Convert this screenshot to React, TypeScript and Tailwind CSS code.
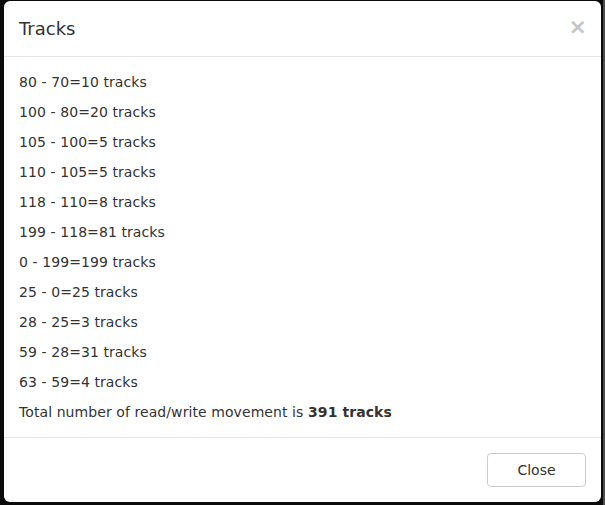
const rows = [
  "80 - 70=10 tracks",
  "100 - 80=20 tracks",
  "105 - 100=5 tracks",
  "110 - 105=5 tracks",
  "118 - 110=8 tracks",
  "199 - 118=81 tracks",
  "0 - 199=199 tracks",
  "25 - 0=25 tracks",
  "28 - 25=3 tracks",
  "59 - 28=31 tracks",
  "63 - 59=4 tracks",
]

export default function App() {
  return (
    <div className="w-[605px] h-[505px] bg-[#0b0b0b] flex overflow-hidden font-['DejaVu_Sans',sans-serif] text-[#333]">
      {/* Modal */}
      <div className="ml-[4px] mt-[1px] w-[597px] h-[501px] bg-white rounded-[6px] flex flex-col overflow-hidden">
        {/* Header */}
        <div className="h-[56px] px-[15px] flex items-center justify-between border-b border-[#e5e5e5]">
          <h4 className="text-[18px] leading-[26px] pt-[1px]">Tracks</h4>
          <span className="text-[22px] font-bold leading-none text-[#c4c4c4] -mr-[1px] -mt-[3px]">×</span>
        </div>

        {/* Body */}
        <div className="p-[15px] text-[14px] leading-[20px] tracking-[0.08px] flex flex-col gap-[10px]">
          {rows.map((row, i) => (
            <p key={i}>{row}</p>
          ))}
          <p>
            Total number of read/write movement is <b>391 tracks</b>
          </p>
        </div>

        {/* Footer */}
        <div className="mt-auto border-t border-[#e5e5e5] p-[15px] flex justify-end">
          <button className="w-[99px] h-[34px] border border-[#ccc] rounded-[4px] text-[14px] text-[#333] bg-white">
            Close
          </button>
        </div>
      </div>
      <div className="ml-auto w-[2px] h-full bg-[#4d4d4d]" />
    </div>
  )
}
